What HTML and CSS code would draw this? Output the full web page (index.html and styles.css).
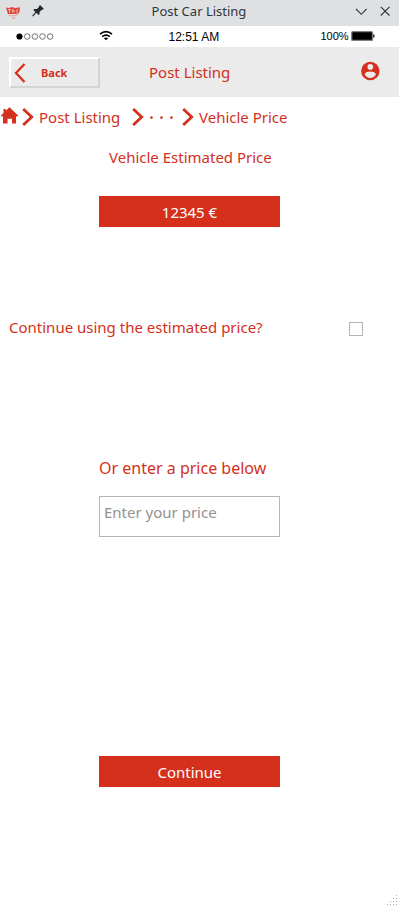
FILE: index.html
```html
<!DOCTYPE html>
<html lang="en">
<head>
<meta charset="utf-8">
<title>Post Car Listing</title>
<link rel="stylesheet" href="styles.css">
</head>
<body>
<div class="window">
  <div class="titlebar">
    <svg class="app-logo" width="16" height="16" viewBox="0 0 16 16"><path d="M1 2.500l3 .5 3-1 3 1 4.800-.8V5L14 8.200 11 9 3 9 2 6z" fill="#e0483c"/><path d="M3 4.500h3M4.500 5v2.500M7.500 7.500V5h1.500v2.500M11 5h2M11 7h2" stroke="#f7cfcb" stroke-width=".8" fill="none"/><path d="M3.500 10l3 1 5-.5 1.500-2M7 12.500l2 1.500 1-2" stroke="#e8a09a" fill="none"/></svg>
    <svg class="pin" width="14" height="14" viewBox="0 0 14 14"><path d="M9 1l3.800 3.800-1.300 1-.8-.1-2.200 2.200.1 2.200-1 1-2.300-2.300L2 12.500l-.8-.8L4.400 8 2.300 5.900l1-1 2.700.1L8.200 2.800 8 2z" fill="#232629"/></svg>
    <h1 class="window-title">Post Car Listing</h1>
    <svg class="window-controls" width="36" height="12" viewBox="0 0 36 12"><path d="M1 3l5.300 5.300L11.600 3M25.800 .8l8.700 8.700M34.500 .8L25.800 9.500" fill="none" stroke="#31363b" stroke-width="1.100"/></svg>
  </div>
  <div class="statusbar">
    <svg class="signal" width="38" height="8" viewBox="0 0 38 8"><circle cx="3.500" cy="3.500" r="3.100"/><g fill="none" stroke="#444" stroke-width=".75"><circle cx="11.200" cy="3.500" r="2.800"/><circle cx="18.900" cy="3.500" r="2.800"/><circle cx="26.500" cy="3.500" r="2.800"/><circle cx="34.100" cy="3.500" r="2.800"/></g></svg>
    <svg class="wifi" width="14" height="11" viewBox="0 0 14 11"><path d="M1 4.100Q7-1 13 4.100M3.200 6.600Q7 3.500 10.800 6.600" fill="none" stroke="#000" stroke-width="1.600"/><path d="M4.800 8.300Q7 6.500 9.200 8.300L7 10.300z"/></svg>
    <span class="clock">12:51 AM</span>
    <span class="percent">100%</span>
    <svg class="battery" width="24" height="10" viewBox="0 0 24 10"><rect x=".7" y=".7" width="20.800" height="8.800" rx="1" fill="#000" stroke="#808080" stroke-width="1.300"/><path d="M22 3.500h1.500v3H22z" fill="#333"/></svg>
  </div>
  <header class="header">
    <button class="back"><svg width="12" height="20" viewBox="0 0 12 20"><path d="M10.500 1L2 10l8.500 9" fill="none" stroke="#d4301c" stroke-width="2.300"/></svg><span>Back</span></button>
    <h2 class="page-title">Post Listing</h2>
    <svg class="account" width="20" height="20" viewBox="0 0 20 20"><circle cx="10.300" cy="10" r="9.200" fill="#d4301c"/><circle cx="10.300" cy="5.900" r="2.800" fill="#ebebeb"/><path d="M4.600 13.300C5.300 11.300 8.300 10.600 10.300 10.600s5 .7 5.700 2.700C14.600 15.800 12.600 17 10.300 17s-4.300-1.200-5.700-3.700z" fill="#ebebeb"/></svg>
  </header>
  <nav class="breadcrumb">
    <svg class="home" width="19" height="17" viewBox="0 0 19 17"><path d="M9.500 .3L18.200 8.500l-1 1.200-1.200-.8v7.600h-4v-4.800H7.500v4.800H3V8.900l-1.200.8-1-1.200L3.500 6V2h2.300v1.700z" fill="#d4301c"/></svg>
    <svg class="chevron first" width="12" height="18" viewBox="0 0 12 18"><path d="M1.200 1l8.500 8-8.500 8" fill="none" stroke="#d4301c" stroke-width="2.800"/></svg>
    <a class="crumb listing">Post Listing</a>
    <svg class="chevron" width="12" height="18" viewBox="0 0 12 18"><path d="M1.200 1l8.500 8-8.500 8" fill="none" stroke="#d4301c" stroke-width="2.800"/></svg>
    <svg class="dots" width="26" height="4" viewBox="0 0 26 4"><g fill="#d4301c"><circle cx="2.500" cy="1.600" r="1.300"/><circle cx="12.500" cy="1.600" r="1.300"/><circle cx="22.500" cy="1.600" r="1.300"/></g></svg>
    <svg class="chevron last" width="12" height="18" viewBox="0 0 12 18"><path d="M1.200 1l8.500 8-8.500 8" fill="none" stroke="#d4301c" stroke-width="2.800"/></svg>
    <a class="crumb">Vehicle Price</a>
  </nav>
  <main class="content">
    <h3 class="estimate-title">Vehicle Estimated Price</h3>
    <div class="bar price">12345 €</div>
    <label class="confirm"><span>Continue using the estimated price?</span><input type="checkbox" class="check"></label>
    <p class="alternative">Or enter a price below</p>
    <input class="price-input" type="text" placeholder="Enter your price">
    <button class="bar continue">Continue</button>
  </main>
  <svg class="grip" width="12" height="12" viewBox="0 0 12 12"><path d="M10 1h1v1h-1zM7 4h1v1H7zM10 4h1v1h-1zM4 7h1v1H4zM7 7h1v1H7zM10 7h1v1h-1zM1 10h1v1H1zM4 10h1v1H4zM7 10h1v1H7zM10 10h1v1h-1z" fill="#aaa"/></svg>
</div>
</body>
</html>
```
FILE: styles.css
```css
* { box-sizing: border-box; }
body { margin: 0; background: #fff; overflow: hidden; }
svg { display: block; flex: none; }
h1, h2, h3, p { margin: 0; font-weight: 400; }
.window {
  position: relative;
  width: 399px;
  height: 910px;
  background: #fff;
  color: #d4301c;
  font: 15px/20px "Noto Sans", sans-serif;
  white-space: nowrap;
}
.titlebar { display: flex; height: 26px; background: #dee0e2; color: #31363b; }
.app-logo { margin: 5px 0 0 5px; }
.pin { margin: 4px 0 0 10px; }
.window-title { width: 96px; margin: 1px 0 0 106.600px; font-size: 13px; line-height: 21px; }
.window-controls { margin: 6px 0 0 103.400px; transform: translateX(4px); }
.statusbar { display: flex; height: 21px; color: #000; font-family: "Liberation Sans", sans-serif; }
.signal { margin: 7px 0 0 16px; }
.wifi { margin: 4px 0 0 45px; }
.clock { width: 60px; margin: 1px 0 0 55.500px; font-size: 12px; }
.percent { width: 30.500px; margin-left: 92px; font-size: 11px; }
.battery { margin-top: 5px; }
.header { display: flex; height: 50px; background: #ebebeb; }
.back {
  display: flex;
  width: 91px;
  height: 31px;
  margin: 10px 0 0 9px;
  padding: 4px 0 0 3px;
  border: 2px solid;
  border-color: #fff #d4d4d4 #d4d4d4 #fff;
  background: #ebebeb;
  color: #d4301c;
  font: bold 11px/20px "Noto Sans", sans-serif;
}
.back span { margin: 0 0 0 15px; }
.page-title { width: 90px; margin: 15px 0 0 49px; font-size: 15px; }
.account { margin: 14px 0 0 121px; }
.breadcrumb { display: flex; height: 41px; padding-top: 10px; }
.chevron { margin-top: 1px; }
.first { margin-left: 3px; }
.listing { width: 93px; margin-left: 5px; }
.dots { margin: 9px 0 0 5px; }
.last { margin: 1px 5px 0 7px; }
.content { display: flex; flex-direction: column; align-items: flex-start; }
.estimate-title { margin: 9px 0 0 109px; font-size: 15px; }
.bar {
  width: 181px;
  height: 31px;
  margin-left: 99px;
  padding: 0;
  border: 0;
  background: #d4301c;
  color: #fff;
  font: 15px/32px "Noto Sans", sans-serif;
  text-align: center;
}
.price { margin-top: 29px; }
.confirm { display: flex; justify-content: space-between; width: 354px; margin: 90px 0 0 9px; }
.check { width: 14px; height: 14px; margin: 5px 0 0; border: 1px solid #b5b5b5; background: #fff; appearance: none; }
.alternative { margin: 121px 0 0 99px; font-size: 16px; }
.price-input {
  width: 181px;
  height: 41px;
  margin: 18px 0 0 99px;
  padding: 0 4px 10px;
  border: 1px solid #b5b5b5;
  border-radius: 0;
  font: 15px/20px "Noto Sans", sans-serif;
  outline: none;
}
.price-input::placeholder { color: #929292; opacity: 1; }
.continue { margin-top: 219px; }
.grip { position: absolute; right: 1px; bottom: 4px; }
```
